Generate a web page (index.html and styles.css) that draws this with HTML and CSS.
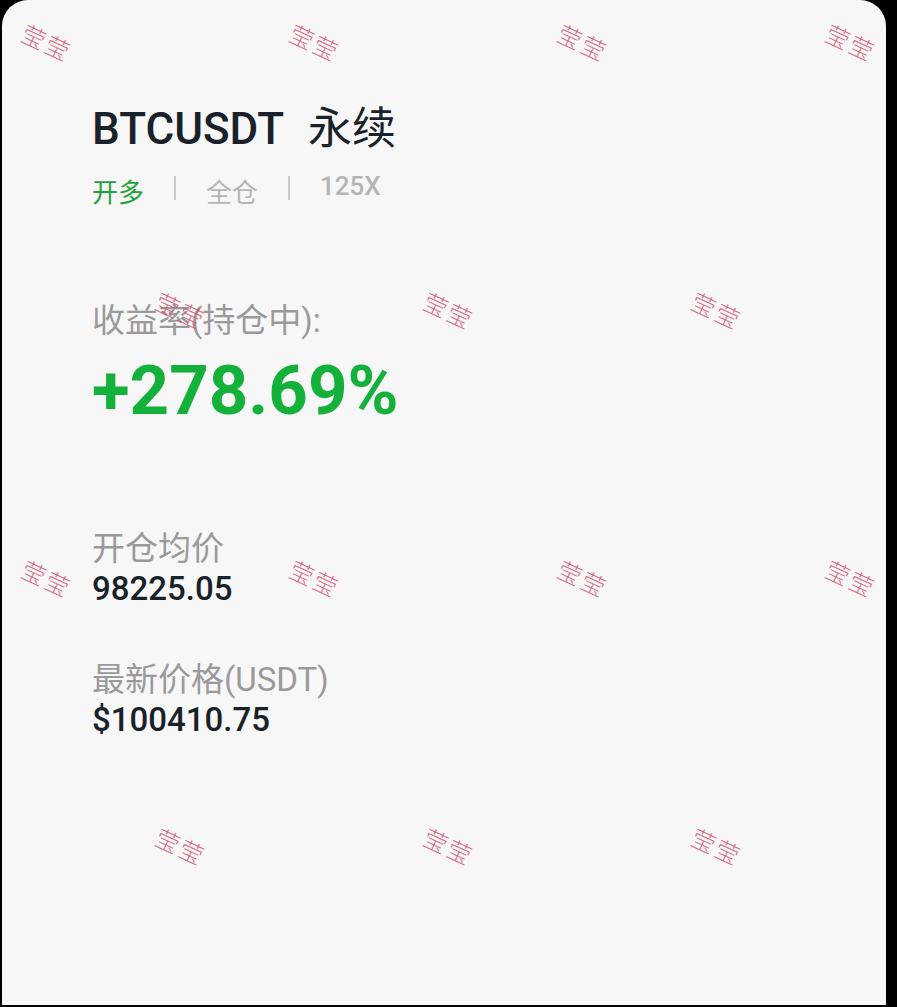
FILE: index.html
```html
<!DOCTYPE html>
<html lang="zh-CN">
<head>
    <meta charset="UTF-8">
    <meta name="viewport" content="width=device-width, initial-scale=1.0">
    <title>BTCUSDT 永续</title>
    <link rel="stylesheet" href="styles.css">
</head>
<body>
    <div class="card">
        <div class="header">
            <h1 class="symbol">BTCUSDT<span class="kind">永续</span></h1>
            <div class="tags">
                <span class="tag long">开多</span>
                <span class="sep"></span>
                <span class="tag">全仓</span>
                <span class="sep"></span>
                <span class="tag lev">125X</span>
            </div>
        </div>

        <div class="pnl">
            <div class="label">收益率(持仓中):</div>
            <div class="rate">+278.69%</div>
        </div>

        <div class="field first">
            <div class="label">开仓均价</div>
            <div class="value">98225.05</div>
        </div>
        <div class="field">
            <div class="label">最新价格(USDT)</div>
            <div class="value">$100410.75</div>
        </div>

        <div class="watermarks">
            <span class="wm" style="left:44px;top:44px">莹莹</span>
            <span class="wm" style="left:312px;top:44px">莹莹</span>
            <span class="wm" style="left:580px;top:44px">莹莹</span>
            <span class="wm" style="left:848px;top:44px">莹莹</span>
            <span class="wm" style="left:178px;top:312px">莹莹</span>
            <span class="wm" style="left:446px;top:312px">莹莹</span>
            <span class="wm" style="left:714px;top:312px">莹莹</span>
            <span class="wm" style="left:44px;top:580px">莹莹</span>
            <span class="wm" style="left:312px;top:580px">莹莹</span>
            <span class="wm" style="left:580px;top:580px">莹莹</span>
            <span class="wm" style="left:848px;top:580px">莹莹</span>
            <span class="wm" style="left:178px;top:848px">莹莹</span>
            <span class="wm" style="left:446px;top:848px">莹莹</span>
            <span class="wm" style="left:714px;top:848px">莹莹</span>
        </div>
    </div>
</body>
</html>
```

FILE: styles.css
```css
html, body {
    margin: 0;
    padding: 0;
    background: #000;
}
body {
    font-family: Roboto, "Noto Sans CJK SC", sans-serif;
    width: 897px;
    height: 1007px;
    overflow: hidden;
}
.card {
    position: relative;
    margin-left: 2px;
    width: 884px;
    height: 1005px;
    background: #f7f7f7;
    border-radius: 26px 26px 0 0;
    padding: 0 0 0 90px;
    box-sizing: border-box;
    overflow: hidden;
}
.header {
    padding-top: 103px;
}
.symbol {
    margin: 0;
    font-size: 44px;
    font-weight: 500;
    line-height: 52px;
    color: #19212a;
}
.kind {
    margin-left: 24px;
    font-weight: 400;
}
.tags {
    display: flex;
    align-items: center;
    margin-top: 18px;
    height: 34px;
}
.tag {
    font-size: 26px;
    color: #b5b5b5;
}
.tag.long {
    color: #1fa33d;
}
.tag.lev {
    font-weight: 500;
    margin-top: -8px;
}
.sep {
    width: 2px;
    height: 24px;
    background: #c9c9c9;
    margin: -4px 30px 0 30px;
}
.pnl {
    margin-top: 94px;
}
.label {
    font-size: 33px;
    line-height: 40px;
    color: #9a9a9a;
}
.rate {
    margin-top: 10px;
    font-size: 69px;
    font-weight: 700;
    line-height: 80px;
    color: #14b13a;
}
.field {
    margin-top: 53px;
}
.field.first {
    margin-top: 98px;
}
.value {
    margin-top: 2px;
    font-size: 33px;
    font-weight: 500;
    line-height: 36px;
    color: #19212a;
}
.watermarks {
    position: absolute;
    inset: 0;
    pointer-events: none;
}
.wm {
    position: absolute;
    font-size: 24px;
    font-weight: 300;
    line-height: 1;
    letter-spacing: 2px;
    color: rgba(214, 80, 110, 0.85);
    transform: translate(-50%, -50%) rotate(25deg);
    white-space: nowrap;
}
```
